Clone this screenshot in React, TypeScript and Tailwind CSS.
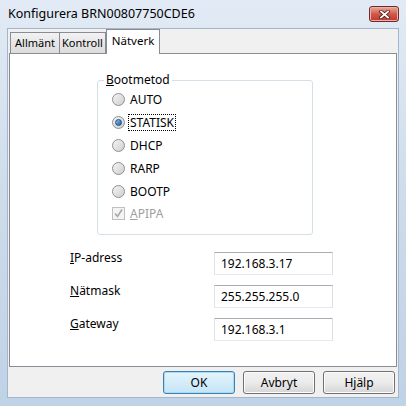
import type { ReactNode } from "react";

const font = { fontFamily: '"Noto Sans", "Open Sans", "Liberation Sans", sans-serif' };

function Radio({ label, checked, focused }: { label: string; checked?: boolean; focused?: boolean }): JSX.Element {
  return (
    <div className="flex h-[23px] items-center">
      <div className="flex h-[13px] w-[13px] items-center justify-center rounded-full border border-[#8f8f8f] bg-gradient-to-br from-[#f4f4f4] to-[#cfcfcf]">
        {checked && <div className="h-[7px] w-[7px] rounded-full border border-[#1c4f86] bg-gradient-to-br from-[#8cc2ec] to-[#215c9c]" />}
      </div>
      <span className={focused ? "ml-[3px] border border-dotted border-black px-[1px] leading-[15px]" : "ml-[5px] leading-[15px]"}>{label}</span>
    </div>
  );
}

function Field({ label, value }: { label: ReactNode; value: string }): JSX.Element {
  return (
    <div className="flex h-[23px] items-center">
      <div className="w-[144px] -translate-y-[6px]">{label}</div>
      <div className="flex h-[23px] w-[119px] items-center border border-[#abadb3] border-b-[#e3e9ef] border-l-[#e2e3ea] border-r-[#dbdfe6] bg-white pl-[6px]">
        {value}
      </div>
    </div>
  );
}

function Button({ children, primary }: { children: ReactNode; primary?: boolean }): JSX.Element {
  return (
    <div
      className={
        primary
          ? "flex h-[23px] w-[72px] items-center justify-center rounded-[3px] border border-[#3c7fb1] bg-gradient-to-b from-[#e5f4fc] to-[#c4e5f6] shadow-[inset_0_0_0_1px_#a8dcf5]"
          : "flex h-[23px] w-[72px] items-center justify-center rounded-[3px] border border-[#707070] bg-gradient-to-b from-[#f2f2f2] via-[#ebebeb] to-[#d5d5d5] shadow-[inset_0_0_0_1px_#fcfcfc]"
      }
    >
      {children}
    </div>
  );
}

export default function App(): JSX.Element {
  return (
    <div style={font} className="flex h-[406px] w-[406px] flex-col overflow-hidden bg-gradient-to-b from-[#e2ebf5] via-[#cddbea] to-[#c0d2e6] text-[12px] text-black">
      {/* title bar */}
      <div className="flex h-[28px] items-start justify-between pl-[8px] pr-[7px]">
        <span className="mt-[6px] text-[12.5px] leading-[16px]">Konfigurera BRN00807750CDE6</span>
        <div className="mt-[6px] flex h-[16px] w-[30px] items-center justify-center rounded-[3px] border border-[#6d2a2a] bg-gradient-to-b from-[#e9a99a] via-[#d0594a] to-[#c0362b] shadow-[inset_0_0_0_1px_#f0b0a8]">
          <svg width="11" height="9" viewBox="0 0 11 9">
            <path d="M2 1.5 L9 7.5 M9 1.5 L2 7.5" stroke="#4a1a1a" strokeWidth="3.4" strokeLinecap="square" />
            <path d="M2 1.5 L9 7.5 M9 1.5 L2 7.5" stroke="#ffffff" strokeWidth="1.8" strokeLinecap="square" />
          </svg>
        </div>
      </div>

      {/* client area */}
      <div className="mx-[7px] mb-[8px] flex flex-1 flex-col border border-[#a3b6cc] bg-[#f0f0f0] px-[1px] pt-[1px]">
        {/* tabs */}
        <div className="relative z-10 flex h-[23px] items-end pl-[1px] text-[11px]">
          <div className="flex h-[21px] w-[50px] items-center justify-center border border-b-0 border-[#898c95] bg-gradient-to-b from-[#f2f2f2] to-[#dcdcdc]">Allmänt</div>
          <div className="-ml-px flex h-[21px] w-[47px] items-center justify-center border border-b-0 border-[#898c95] bg-gradient-to-b from-[#f2f2f2] to-[#dcdcdc]">Kontroll</div>
          <div className="-mb-px flex h-[25px] w-[54px] items-start justify-center border border-b-0 border-[#898c95] bg-white pt-[2px] text-[11.5px]">Nätverk</div>
        </div>
        <div className="flex h-[314px] flex-col border border-[#898c95] bg-white">
          {/* group box */}
          <div className="ml-[87px] mt-[26px] h-[155px] w-[216px] rounded-[3px] border border-[#d5dfe5] pl-[14px]">
            <div className="-mt-[9px] -ml-[8px] w-fit bg-white px-[2px] leading-[16px]">
              <span className="underline">B</span>ootmetod
            </div>
            <div className="flex flex-col">
              <Radio label="AUTO" />
              <Radio label="STATISK" checked focused />
              <Radio label="DHCP" />
              <Radio label="RARP" />
              <Radio label="BOOTP" />
              <div className="flex h-[21px] items-center text-[#a0a0a0]">
                <div className="flex h-[13px] w-[13px] items-center justify-center border border-[#c0c0c0] bg-[#f4f4f4]">
                  <svg width="11" height="11" viewBox="0 0 11 11">
                    <path d="M2 5.5 L4.5 8.5 L9 1.5" fill="none" stroke="#a8a8a8" strokeWidth="1.6" />
                  </svg>
                </div>
                <span className="ml-[5px]">
                  <span className="underline">A</span>PIPA
                </span>
              </div>
            </div>
          </div>

          {/* address fields */}
          <div className="ml-[60px] mt-[17px] flex flex-col gap-[10px]">
            <Field label={<><span className="underline">I</span>P-adress</>} value="192.168.3.17" />
            <Field label={<><span className="underline">N</span>ätmask</>} value="255.255.255.0" />
            <Field label={<><span className="underline">G</span>ateway</>} value="192.168.3.1" />
          </div>
        </div>

        {/* buttons */}
        <div className="mt-[4px] flex justify-end gap-[8px] pr-[2px]">
          <Button primary>OK</Button>
          <Button>Avbryt</Button>
          <Button>Hjälp</Button>
        </div>
      </div>
    </div>
  );
}
